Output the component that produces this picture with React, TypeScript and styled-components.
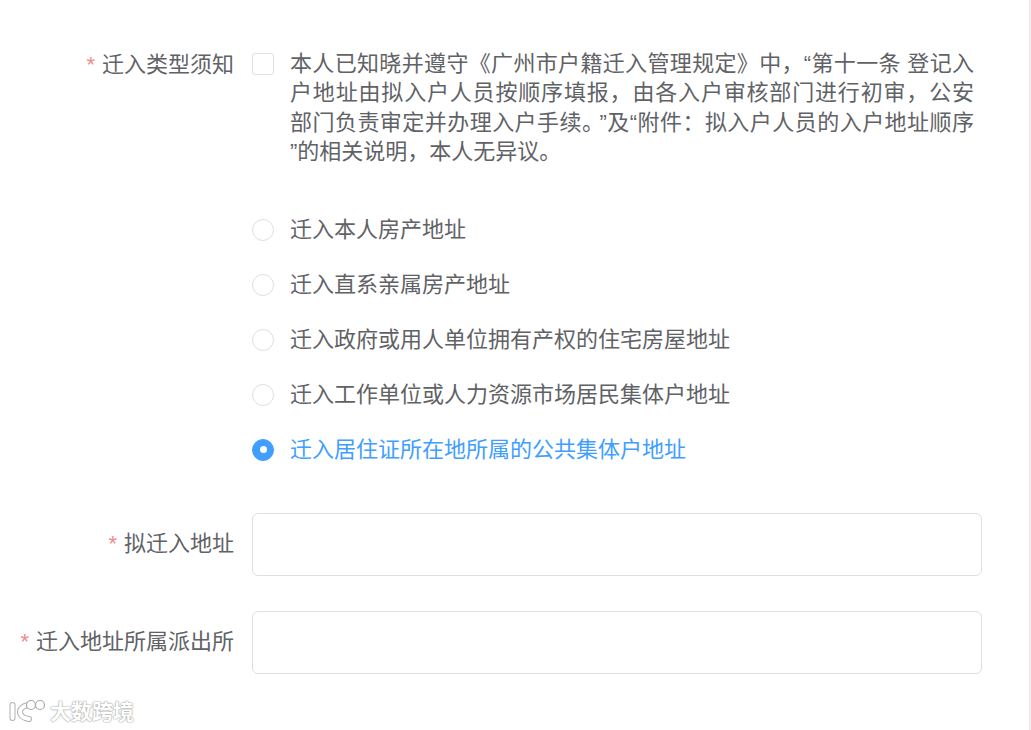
import styled, { createGlobalStyle } from "styled-components";

const GlobalStyle = createGlobalStyle`
    html, body {
        margin: 0;
        padding: 0;
        background: #fff;
        overflow: hidden;
    }
    body {
        font-family: "Liberation Sans", "Noto Sans CJK SC", sans-serif;
        color: #606266;
    }
`;

const Page = styled.div`
    position: relative;
    box-sizing: border-box;
    width: 1031px;
    height: 730px;
    padding: 49px 49px 0 0;
    border-right: 2px solid #f0e8ea;
    overflow: hidden;
`;

const FormItem = styled.div<{ gap: number }>`
    display: flex;
    align-items: flex-start;
    margin-bottom: ${({ gap }) => gap}px;
`;

const Label = styled.label<{ tall?: boolean }>`
    flex: 0 0 252px;
    box-sizing: border-box;
    padding-right: 18px;
    text-align: right;
    font-size: 22px;
    line-height: ${({ tall }) => (tall ? "60px" : "30px")};
    margin-top: 1px;
    color: #606266;
    &::before {
        content: "*";
        color: #f08a8a;
        margin-right: 7px;
    }
`;

const Content = styled.div`
    flex: 1;
    min-width: 0;
    display: flex;
    flex-direction: column;
`;

const NoticeRow = styled.div`
    display: flex;
    align-items: flex-start;
    margin-bottom: 36px;
`;

const CheckBox = styled.span`
    flex: 0 0 22px;
    box-sizing: border-box;
    height: 22px;
    margin-top: 4px;
    margin-right: 16px;
    border: 1px solid #dcdfe6;
    border-radius: 3px;
    background: #fff;
`;

const NoticeText = styled.div`
    width: 684px;
    font-size: 22px;
    line-height: 29.33px;
    color: #606266;
`;

const NoticeLine = styled.span<{ last?: boolean }>`
    display: block;
    text-align: justify;
    text-align-last: ${({ last }) => (last ? "left" : "justify")};
    white-space: nowrap;
`;

const ClosingQuote = styled.span`
    margin-left: 6px;
`;

const RadioRow = styled.div`
    display: flex;
    align-items: center;
    height: 55px;
`;

const RadioDot = styled.span<{ checked?: boolean }>`
    flex: 0 0 22px;
    box-sizing: border-box;
    height: 22px;
    margin-right: 16px;
    border-radius: 50%;
    border: 1px solid ${({ checked }) => (checked ? "#409eff" : "#dcdfe6")};
    background: ${({ checked }) => (checked ? "#409eff" : "#fff")};
    display: flex;
    align-items: center;
    justify-content: center;
    &::after {
        content: "";
        width: 7px;
        height: 7px;
        border-radius: 50%;
        background: ${({ checked }) => (checked ? "#fff" : "transparent")};
    }
`;

const RadioText = styled.span<{ checked?: boolean }>`
    font-size: 22px;
    line-height: 30px;
    color: ${({ checked }) => (checked ? "#409eff" : "#606266")};
`;

const TextInput = styled.input`
    display: block;
    box-sizing: border-box;
    width: 730px;
    height: 63px;
    padding: 0 20px;
    border: 1px solid #dcdfe6;
    border-radius: 6px;
    background: #fff;
    outline: none;
    font: inherit;
    font-size: 22px;
`;

const Watermark = styled.div`
    position: absolute;
    left: 9px;
    bottom: 4px;
    display: flex;
    align-items: center;
    gap: 3px;
`;

const WatermarkText = styled.span`
    font-size: 21px;
    line-height: 26px;
    font-weight: 700;
    color: #fff;
    text-shadow: 0 0 2px #9a9a9a, 0 0 1px #9a9a9a;
`;

const RADIOS = [
    "迁入本人房产地址",
    "迁入直系亲属房产地址",
    "迁入政府或用人单位拥有产权的住宅房屋地址",
    "迁入工作单位或人力资源市场居民集体户地址",
    "迁入居住证所在地所属的公共集体户地址",
];

const SELECTED = 4;

const WatermarkLogo = () => (
    <svg width="38" height="28" viewBox="0 0 38 28" fill="none">
        <g stroke="#b0b0b0" strokeWidth="6" strokeLinecap="round" strokeLinejoin="round">
            <path d="M3.5 7v13" />
            <path d="M19 7c-5 1-8 4-8 7s3 6 9 7" />
        </g>
        <g stroke="#fff" strokeWidth="4" strokeLinecap="round" strokeLinejoin="round">
            <path d="M3.5 7v13" />
            <path d="M19 7c-5 1-8 4-8 7s3 6 9 7" />
        </g>
        <circle cx="22" cy="7" r="4.5" fill="#fff" stroke="#a8a8a8" strokeWidth="1.2" />
        <circle cx="31" cy="7" r="4.5" fill="#fff" stroke="#a8a8a8" strokeWidth="1.2" />
    </svg>
);

const App = () => {
    return (
        <Page>
            <GlobalStyle />
            <FormItem gap={36}>
                <Label>迁入类型须知</Label>
                <Content>
                    <NoticeRow>
                        <CheckBox />
                        <NoticeText>
                            <NoticeLine>本人已知晓并遵守《广州市户籍迁入管理规定》中，“第十一条 登记入</NoticeLine>
                            <NoticeLine>户地址由拟入户人员按顺序填报，由各入户审核部门进行初审，公安</NoticeLine>
                            <NoticeLine>
                                部门负责审定并办理入户手续。<ClosingQuote>”</ClosingQuote>及“附件：拟入户人员的入户地址顺序
                            </NoticeLine>
                            <NoticeLine last>”的相关说明，本人无异议。</NoticeLine>
                        </NoticeText>
                    </NoticeRow>
                    {RADIOS.map((text, i) => (
                        <RadioRow key={text}>
                            <RadioDot checked={i === SELECTED} />
                            <RadioText checked={i === SELECTED}>{text}</RadioText>
                        </RadioRow>
                    ))}
                </Content>
            </FormItem>
            <FormItem gap={35}>
                <Label tall>拟迁入地址</Label>
                <Content>
                    <TextInput />
                </Content>
            </FormItem>
            <FormItem gap={0}>
                <Label tall>迁入地址所属派出所</Label>
                <Content>
                    <TextInput />
                </Content>
            </FormItem>
            <Watermark>
                <WatermarkLogo />
                <WatermarkText>大数跨境</WatermarkText>
            </Watermark>
        </Page>
    );
};

export default App;
